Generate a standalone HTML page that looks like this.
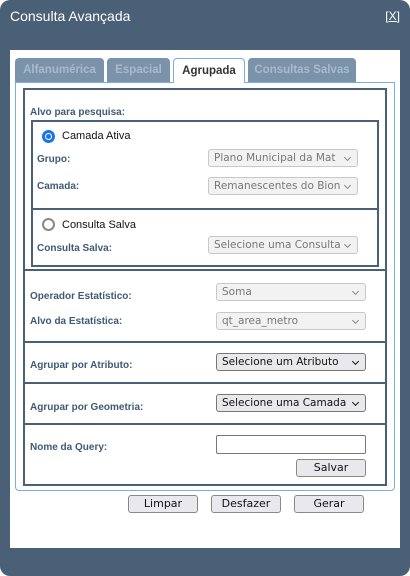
<!DOCTYPE html>
<html><head><meta charset="utf-8"><style>
*{box-sizing:border-box;margin:0;padding:0}
body{width:410px;height:576px;background:#fff;position:relative;overflow:hidden;font-family:"Liberation Sans",sans-serif}
.dlg{position:absolute;left:0;top:0;width:410px;height:576px;background:#4a6076;border-radius:10px}
.title{position:absolute;left:10px;top:8px;color:#fff;font-size:14px}
.x{position:absolute;right:10px;top:9px;color:#fff;font-size:12px}
.content{position:absolute;left:10px;top:50px;width:390px;height:498px;background:#fff}
.tab{position:absolute;top:58px;height:24px;background:#7a93aa;border-radius:4px 4px 0 0;color:#a8bacb;font-weight:bold;font-size:11.5px;text-align:center;line-height:24px}
.tab.act{background:#fff;border:1px solid #7aaedb;border-bottom:none;color:#333;height:25px;z-index:2}
.panel{position:absolute;left:15px;top:82px;width:380px;height:409px;border:1px solid #7aaedb;border-radius:0 0 4px 4px}
.box{position:absolute;border:2px solid #4a6076}
.lbl{position:absolute;color:#3f5a75;font-weight:bold;font-size:10px}
.sel{position:absolute;height:18px;border:1px solid #c8c8c8;background:#f2f2f2;border-radius:3px;color:#777;font-family:"DejaVu Sans",sans-serif;font-size:10.5px;line-height:16px;padding-left:5px;padding-right:16px;white-space:nowrap;overflow:hidden}
.sel.on{border:1px solid #777;background:#e9e9ed;color:#111}
.sel::after{content:"";position:absolute;right:7px;top:5px;width:4px;height:4px;border-right:1px solid #888;border-bottom:1px solid #888;transform:rotate(45deg);background:inherit}
.sel.on::after{border-color:#111}
.sel span{display:block;overflow:hidden}
.btn{position:absolute;height:18px;border:1px solid #888;background:#e9e9ed;border-radius:3px;font-family:"DejaVu Sans",sans-serif;font-size:11px;text-align:center;line-height:16px;color:#111}
.radio{position:absolute;width:13px;height:13px;border-radius:50%}
.rtxt{position:absolute;font-size:11px;color:#111}
</style></head><body>
<div class="dlg">
<div class="title">Consulta Avançada</div>
<div class="x">[<u>X</u>]</div>
<div class="content"></div>
<div class="tab" style="left:15px;width:89px">Alfanumérica</div>
<div class="tab" style="left:107px;width:63px">Espacial</div>
<div class="tab act" style="left:173px;width:72px">Agrupada</div>
<div class="tab" style="left:248px;width:108px">Consultas Salvas</div>
<div class="panel"></div>
<div class="box" style="left:23px;top:88px;width:364px;height:398px"></div>
<div class="lbl" style="left:30px;top:107px">Alvo para pesquisa:</div>
<div class="box" style="left:31px;top:120px;width:348px;height:90px"></div>
<div class="box" style="left:31px;top:208px;width:348px;height:59px"></div>
<div class="radio" style="left:42px;top:130px;border:3px solid #1a73e8;background:#fff"><div style="position:absolute;left:1px;top:1px;width:5px;height:5px;border-radius:50%;background:#1a73e8"></div></div>
<div class="rtxt" style="left:62px;top:130px">Camada Ativa</div>
<div class="lbl" style="left:37px;top:154px">Grupo:</div>
<div class="sel" style="left:208px;top:149px;width:150px"><span>Plano Municipal da Mat</span></div>
<div class="lbl" style="left:37px;top:181px">Camada:</div>
<div class="sel" style="left:208px;top:177px;width:150px"><span>Remanescentes do Bion</span></div>
<div class="radio" style="left:42px;top:218px;border:2px solid #888;background:#fff"></div>
<div class="rtxt" style="left:62px;top:219px">Consulta Salva</div>
<div class="lbl" style="left:37px;top:243px">Consulta Salva:</div>
<div class="sel" style="left:208px;top:236px;width:150px"><span>Selecione uma Consulta</span></div>
<div style="position:absolute;left:23px;top:269px;width:364px;height:2px;background:#4a6076"></div>
<div class="lbl" style="left:30px;top:291px">Operador Estatístico:</div>
<div class="sel" style="left:216px;top:283px;width:150px">Soma</div>
<div class="lbl" style="left:30px;top:316px">Alvo da Estatística:</div>
<div class="sel" style="left:216px;top:312px;width:150px">qt_area_metro</div>
<div style="position:absolute;left:23px;top:341px;width:364px;height:2px;background:#4a6076"></div>
<div class="lbl" style="left:30px;top:360px">Agrupar por Atributo:</div>
<div class="sel on" style="left:216px;top:353px;width:150px">Selecione um Atributo</div>
<div style="position:absolute;left:23px;top:382px;width:364px;height:2px;background:#4a6076"></div>
<div class="lbl" style="left:30px;top:402px">Agrupar por Geometria:</div>
<div class="sel on" style="left:216px;top:394px;width:150px">Selecione uma Camada</div>
<div style="position:absolute;left:23px;top:423px;width:364px;height:2px;background:#4a6076"></div>
<div class="lbl" style="left:30px;top:442px">Nome da Query:</div>
<div style="position:absolute;left:216px;top:435px;width:150px;height:19px;border:1px solid #777;border-radius:2px;background:#fff"></div>
<div class="btn" style="left:296px;top:459px;width:70px">Salvar</div>
<div class="btn" style="left:128px;top:495px;width:70px">Limpar</div>
<div class="btn" style="left:211px;top:495px;width:70px">Desfazer</div>
<div class="btn" style="left:294px;top:495px;width:70px">Gerar</div>
</div>
</body></html>
